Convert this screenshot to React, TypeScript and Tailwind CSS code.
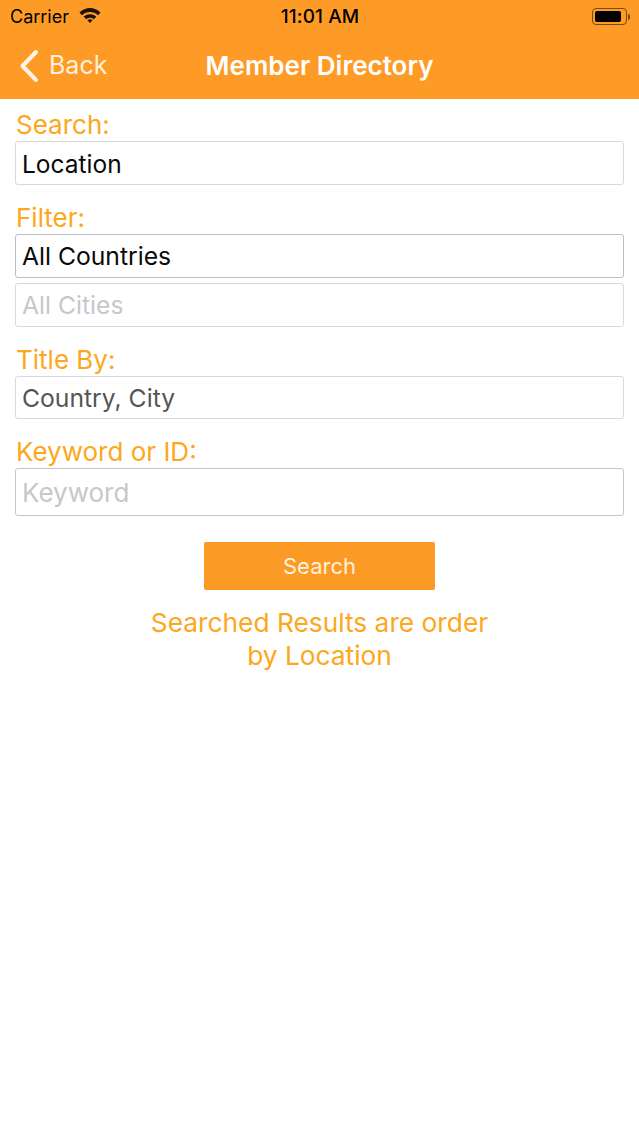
const font = { fontFamily: '"Inter", "Liberation Sans", sans-serif' };

function Label({ text }: { text: string }) {
  return <div className="h-[34px] flex items-center pl-px pt-[1px] text-[26px] leading-[34px] text-[#fca71c]">{text}</div>;
}

function Field({ text, color, h = "h-[44px]", border = "border-[#d8d8de]", size = "text-[24.7px]", pt = "pt-[2px]" }: { text: string; color: string; h?: string; border?: string; size?: string; pt?: string }) {
  return (
    <div className={`${h} ${border} ${color} ${size} ${pt} flex items-center border rounded-[3px] pl-[6px] bg-white`}>
      {text}
    </div>
  );
}

export default function App() {
  return (
    <div className="w-[639px] h-[1136px] bg-white flex flex-col overflow-hidden" style={font}>
      <div className="h-[99px] bg-[#fe9b26] flex flex-col shrink-0">
        <div className="h-[32px] flex items-center justify-between pl-[10px] pr-[9px] pt-[1px] text-black">
          <div className="flex items-center gap-[10px] w-[200px]">
            <span className="text-[18px]">Carrier</span>
            <svg width="22" height="16" viewBox="0 0 22 16" className="-mt-[3px]">
              <path d="M0.5 5.5C6.5 -0.5 15.5 -0.5 21.5 5.5L19 8.2C14.4 3.8 7.6 3.8 3 8.2Z" fill="#1a1208" />
              <path d="M4.6 9.6C8.2 6.3 13.8 6.3 17.4 9.6L14.9 12.2C12.7 10.2 9.3 10.2 7.1 12.2Z" fill="#1a1208" />
              <path d="M8.4 13.3C10 12 12 12 13.6 13.3L11 16Z" fill="#1a1208" />
            </svg>
          </div>
          <span className="text-[19px] font-medium pt-[1px] tracking-[0.1px]">11:01 AM</span>
          <div className="w-[200px] flex justify-end items-center gap-[1px]">
            <div className="w-[35px] h-[17px] rounded-[4px] border border-[#7a4a0c] p-[2px]">
              <div className="w-[26px] h-full bg-black rounded-[2px]" />
            </div>
            <div className="w-[2px] h-[6px] bg-[#7a4a0c] rounded-r-sm" />
          </div>
        </div>
        <div className="relative flex-1 flex items-center justify-center">
          <div className="absolute left-[19px] top-[15px] flex items-center gap-[10px]">
            <svg width="20" height="34" viewBox="0 0 20 34">
              <path d="M17 3L3.5 17L17 31" fill="none" stroke="#fff4e6" strokeWidth="4" strokeLinecap="round" strokeLinejoin="round" />
            </svg>
            <span className="text-[25px] text-[#fff1dc]">Back</span>
          </div>
          <span className="text-[26px] font-semibold text-white">Member Directory</span>
        </div>
      </div>

      <div className="px-[15px] pt-[8px]">
        <Label text="Search:" />
        <Field text="Location" color="text-[#0a0a0a]" size="text-[24.5px]" pt="pt-[3px]" />
        <div className="h-[15px]" />
        <Label text="Filter:" />
        <Field text="All Countries" color="text-[#0a0a0a]" border="border-[#bcbcc4]" />
        <div className="h-[5px]" />
        <Field text="All Cities" color="text-[#c7c7cd]" />
        <div className="h-[15px]" />
        <Label text="Title By:" />
        <Field text="Country, City" color="text-[#555555]" h="h-[43px]" pt="pt-[3px]" />
        <div className="h-[15px]" />
        <Label text="Keyword or ID:" />
        <Field text="Keyword" color="text-[#c7c7cd]" h="h-[48px]" border="border-[#c4c4cf]" size="text-[26px]" pt="pt-0" />
        <div className="flex justify-center mt-[26px]">
          <div className="w-[231px] h-[48px] rounded-[2px] bg-[#fb9a24] flex items-center justify-center text-[22px] text-[#fff1dc]">
            Search
          </div>
        </div>
        <div className="mt-[16px] text-center text-[26.3px] leading-[33px] text-[#fca71c]">
          Searched Results are order
          <br />
          by Location
        </div>
      </div>
    </div>
  );
}
